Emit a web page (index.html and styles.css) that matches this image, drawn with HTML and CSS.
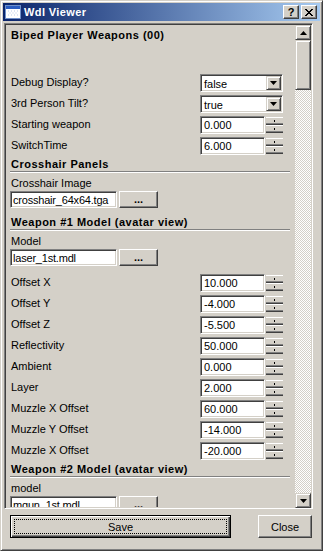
FILE: index.html
```html
<!DOCTYPE html>
<html lang="en">
<head>
    <meta charset="UTF-8">
    <title>Wdl Viewer</title>
    <link rel="stylesheet" href="styles.css">
</head>
<body>
    <div class="window">
        <div class="titlebar">
            <svg class="app-icon" width="16" height="14" viewBox="0 0 16 14">
                <rect x="0.5" y="0.5" width="15" height="13" fill="#fff" stroke="#6f8fc8"/>
                <rect x="1" y="1" width="14" height="3" fill="#2a5cc0"/>
                <path d="M3 6h1M6 6h1M9 6h1M12 6h1M4.5 8h1M7.5 8h1M10.5 8h1M3 10h1M6 10h1M9 10h1M12 10h1" stroke="#b8cbe8"/>
            </svg>
            <span class="title">Wdl Viewer</span>
            <div class="cap-buttons">
                <div class="cap-btn">?</div>
                <div class="cap-btn">
                    <svg width="8" height="7" viewBox="0 0 8 7"><path d="M0 0l7 7M1 0l7 7M7 0l-7 7M8 0l-7 7" stroke="#000" stroke-width="1"/></svg>
                </div>
            </div>
        </div>

        <div class="panel">
            <div class="content">
                <div class="heading">Biped Player Weapons (00)</div>

                <div class="props first">
                    <div class="row">
                        <span class="label">Debug Display?</span>
                        <div class="select"><span class="select-text">false</span><div class="drop-btn"><svg width="7" height="4" viewBox="0 0 7 4"><path d="M0 0h7L3.5 4z" fill="#000"/></svg></div></div>
                    </div>
                    <div class="row">
                        <span class="label">3rd Person Tilt?</span>
                        <div class="select"><span class="select-text">true</span><div class="drop-btn"><svg width="7" height="4" viewBox="0 0 7 4"><path d="M0 0h7L3.5 4z" fill="#000"/></svg></div></div>
                    </div>
                    <div class="row">
                        <span class="label">Starting weapon</span>
                        <div class="spin"><div class="spin-field">0.000</div><div class="spin-btns"><div class="spin-btn"><i></i></div><div class="spin-btn"><i></i></div></div></div>
                    </div>
                    <div class="row">
                        <span class="label">SwitchTime</span>
                        <div class="spin"><div class="spin-field">6.000</div><div class="spin-btns"><div class="spin-btn"><i></i></div><div class="spin-btn"><i></i></div></div></div>
                    </div>
                </div>

                <div class="heading section">Crosshair Panels</div>
                <div class="sep"></div>
                <div class="field-label">Crosshair Image</div>
                <div class="field-row">
                    <div class="field">crosshair_64x64.tga</div>
                    <div class="browse">...</div>
                </div>

                <div class="heading section gap">Weapon #1 Model (avatar view)</div>
                <div class="sep"></div>
                <div class="field-label">Model</div>
                <div class="field-row">
                    <div class="field">laser_1st.mdl</div>
                    <div class="browse">...</div>
                </div>

                <div class="props after-field">
                    <div class="row"><span class="label">Offset X</span><div class="spin"><div class="spin-field">10.000</div><div class="spin-btns"><div class="spin-btn"><i></i></div><div class="spin-btn"><i></i></div></div></div></div>
                    <div class="row"><span class="label">Offset Y</span><div class="spin"><div class="spin-field">-4.000</div><div class="spin-btns"><div class="spin-btn"><i></i></div><div class="spin-btn"><i></i></div></div></div></div>
                    <div class="row"><span class="label">Offset Z</span><div class="spin"><div class="spin-field">-5.500</div><div class="spin-btns"><div class="spin-btn"><i></i></div><div class="spin-btn"><i></i></div></div></div></div>
                    <div class="row"><span class="label">Reflectivity</span><div class="spin"><div class="spin-field">50.000</div><div class="spin-btns"><div class="spin-btn"><i></i></div><div class="spin-btn"><i></i></div></div></div></div>
                    <div class="row"><span class="label">Ambient</span><div class="spin"><div class="spin-field">0.000</div><div class="spin-btns"><div class="spin-btn"><i></i></div><div class="spin-btn"><i></i></div></div></div></div>
                    <div class="row"><span class="label">Layer</span><div class="spin"><div class="spin-field">2.000</div><div class="spin-btns"><div class="spin-btn"><i></i></div><div class="spin-btn"><i></i></div></div></div></div>
                    <div class="row"><span class="label">Muzzle X Offset</span><div class="spin"><div class="spin-field">60.000</div><div class="spin-btns"><div class="spin-btn"><i></i></div><div class="spin-btn"><i></i></div></div></div></div>
                    <div class="row"><span class="label">Muzzle Y Offset</span><div class="spin"><div class="spin-field">-14.000</div><div class="spin-btns"><div class="spin-btn"><i></i></div><div class="spin-btn"><i></i></div></div></div></div>
                    <div class="row"><span class="label">Muzzle X Offset</span><div class="spin"><div class="spin-field">-20.000</div><div class="spin-btns"><div class="spin-btn"><i></i></div><div class="spin-btn"><i></i></div></div></div></div>
                </div>

                <div class="heading section">Weapon #2 Model (avatar view)</div>
                <div class="sep"></div>
                <div class="field-label">model</div>
                <div class="field-row">
                    <div class="field">mgun_1st.mdl</div>
                    <div class="browse">...</div>
                </div>
            </div>

            <div class="scrollbar">
                <div class="sb-btn"><svg width="7" height="4" viewBox="0 0 7 4"><path d="M3.5 0L7 4H0z" fill="#000"/></svg></div>
                <div class="sb-thumb"></div>
                <div class="sb-track"></div>
                <div class="sb-btn"><svg width="7" height="4" viewBox="0 0 7 4"><path d="M0 0h7L3.5 4z" fill="#000"/></svg></div>
            </div>
        </div>

        <div class="footer">
            <div class="btn btn-default"><span class="focus">Save</span></div>
            <div class="btn btn-close">Close</div>
        </div>
    </div>
</body>
</html>
```

FILE: styles.css
```css
body {
    margin: 0;
    font-family: "Liberation Sans", Arial, sans-serif;
    font-size: 11px;
    color: #000;
    background: #d4d0c8;
}
.window {
    box-sizing: border-box;
    width: 323px;
    height: 551px;
    padding: 2px;
    border: 1px solid;
    border-color: #d4d0c8 #404040 #404040 #d4d0c8;
    box-shadow: inset 1px 1px #fff, inset -1px -1px #808080;
    background: #d4d0c8;
    display: flex;
    flex-direction: column;
}
.titlebar {
    height: 18px;
    flex: none;
    display: flex;
    align-items: center;
    background: linear-gradient(to right, #0a246a, #a6caf0);
    color: #fff;
}
.app-icon {
    margin-left: 2px;
}
.title {
    margin-left: 3px;
    font-weight: bold;
    letter-spacing: 0.4px;
}
.cap-buttons {
    margin-left: auto;
    margin-right: 3px;
    display: flex;
    gap: 2px;
}
.cap-btn {
    box-sizing: border-box;
    width: 16px;
    height: 14px;
    display: flex;
    align-items: center;
    justify-content: center;
    background: #d4d0c8;
    border: 1px solid;
    border-color: #fff #404040 #404040 #fff;
    box-shadow: inset -1px -1px #808080;
    color: #000;
    font-weight: bold;
    font-size: 11px;
    line-height: 12px;
}

/* sunken list area */
.panel {
    box-sizing: border-box;
    flex: none;
    width: 309px;
    height: 486px;
    margin: 2px 0 0 1px;
    border: 1px solid;
    border-color: #808080 #fff #fff #808080;
    box-shadow: inset 1px 1px #404040, inset -1px -1px #d4d0c8;
    display: flex;
    overflow: hidden;
}
.content {
    flex: 1;
    min-width: 0;
    overflow: hidden;
    padding: 4px 0 0 5px;
    margin: 1px 0 1px 1px;
}
.heading {
    font-weight: bold;
    height: 13px;
    line-height: 13px;
    letter-spacing: 0.5px;
    white-space: nowrap;
}
.heading.section {
    margin-top: 1px;
}
.heading.gap {
    margin-top: 8px;
}
.sep {
    width: 280px;
    margin-left: -1px;
    border-top: 1px solid #808080;
    border-bottom: 1px solid #fff;
}
.props.first {
    margin-top: 32px;
}
.props.after-field {
    margin-top: 8px;
}
.row {
    display: flex;
    align-items: center;
    height: 18px;
    margin-bottom: 3px;
}
.label {
    width: 189px;
    line-height: 13px;
    padding-bottom: 2px;
    white-space: nowrap;
}
.select {
    box-sizing: border-box;
    width: 83px;
    height: 18px;
    padding: 1px;
    display: flex;
    background: #fff;
    border: 1px solid;
    border-color: #808080 #fff #fff #808080;
    box-shadow: inset 1px 1px #404040, inset -1px -1px #d4d0c8;
}
.select-text {
    flex: 1;
    padding: 3px 0 0 2px;
    line-height: 11px;
}
.drop-btn {
    box-sizing: border-box;
    width: 15px;
    height: 14px;
    display: flex;
    align-items: center;
    justify-content: center;
    background: #d4d0c8;
    border: 1px solid;
    border-color: #d4d0c8 #404040 #404040 #d4d0c8;
    box-shadow: inset 1px 1px #fff, inset -1px -1px #808080;
}
.spin {
    display: flex;
    width: 83px;
    height: 18px;
}
.spin-field {
    box-sizing: border-box;
    width: 65px;
    height: 18px;
    padding: 2px 0 0 3px;
    line-height: 13px;
    background: #fff;
    border: 1px solid;
    border-color: #808080 #fff #fff #808080;
    box-shadow: inset 1px 1px #404040, inset -1px -1px #d4d0c8;
}
.spin-btns {
    flex: 1;
    display: flex;
    flex-direction: column;
    padding: 1px 0 1px 1px;
}
.spin-btn {
    flex: 1;
    display: flex;
    align-items: center;
    justify-content: center;
    border-top: 1px solid #fff;
    border-bottom: 1px solid #404040;
    box-shadow: inset 0 -1px #808080;
}
.spin-btn i {
    width: 1px;
    height: 2px;
    background: #000;
}
.field-label {
    margin-top: 4px;
    height: 13px;
    line-height: 13px;
}
.field-row {
    display: flex;
    margin-top: 1px;
    margin-left: -1px;
}
.field {
    box-sizing: border-box;
    width: 107px;
    height: 17px;
    padding: 2px 0 0 2px;
    line-height: 12px;
    letter-spacing: -0.2px;
    white-space: nowrap;
    overflow: hidden;
    background: #fff;
    border: 1px solid;
    border-color: #808080 #fff #fff #808080;
    box-shadow: inset 1px 1px #404040, inset -1px -1px #d4d0c8;
}
.browse {
    box-sizing: border-box;
    width: 39px;
    height: 17px;
    margin-left: 2px;
    text-align: center;
    font-weight: bold;
    line-height: 15px;
    border: 1px solid;
    border-color: #fff #404040 #404040 #fff;
    box-shadow: inset -1px -1px #808080;
}

/* scrollbar */
.scrollbar {
    width: 16px;
    flex: none;
    margin: 1px 1px 0 0;
    display: flex;
    flex-direction: column;
    background: repeating-conic-gradient(#fff 0 25%, #d4d0c8 0 50%) 0 0 / 2px 2px;
}
.sb-btn {
    box-sizing: border-box;
    height: 15px;
    display: flex;
    align-items: center;
    justify-content: center;
    background: #d4d0c8;
    border: 1px solid;
    border-color: #d4d0c8 #404040 #404040 #d4d0c8;
    box-shadow: inset 1px 1px #fff, inset -1px -1px #808080;
}
.sb-thumb {
    box-sizing: border-box;
    height: 50px;
    background: #d4d0c8;
    border: 1px solid;
    border-color: #d4d0c8 #404040 #404040 #d4d0c8;
    box-shadow: inset 1px 1px #fff, inset -1px -1px #808080;
}
.sb-track {
    flex: 1;
}

/* bottom buttons */
.footer {
    display: flex;
    padding: 6px 8px 0 7px;
}
.btn {
    box-sizing: border-box;
    height: 23px;
    display: flex;
    align-items: center;
    justify-content: center;
    background: #d4d0c8;
}
.btn-default {
    width: 221px;
    border: 1px solid #000;
    box-shadow: inset 1px 1px #fff, inset -1px -1px #404040, inset -2px -2px #808080;
}
.focus {
    align-self: stretch;
    flex: 1;
    margin: 3px;
    border: 1px dotted #000;
    display: flex;
    align-items: center;
    justify-content: center;
}
.btn-close {
    width: 54px;
    margin-left: auto;
    border: 1px solid;
    border-color: #fff #404040 #404040 #fff;
    box-shadow: inset -1px -1px #808080;
}
```
